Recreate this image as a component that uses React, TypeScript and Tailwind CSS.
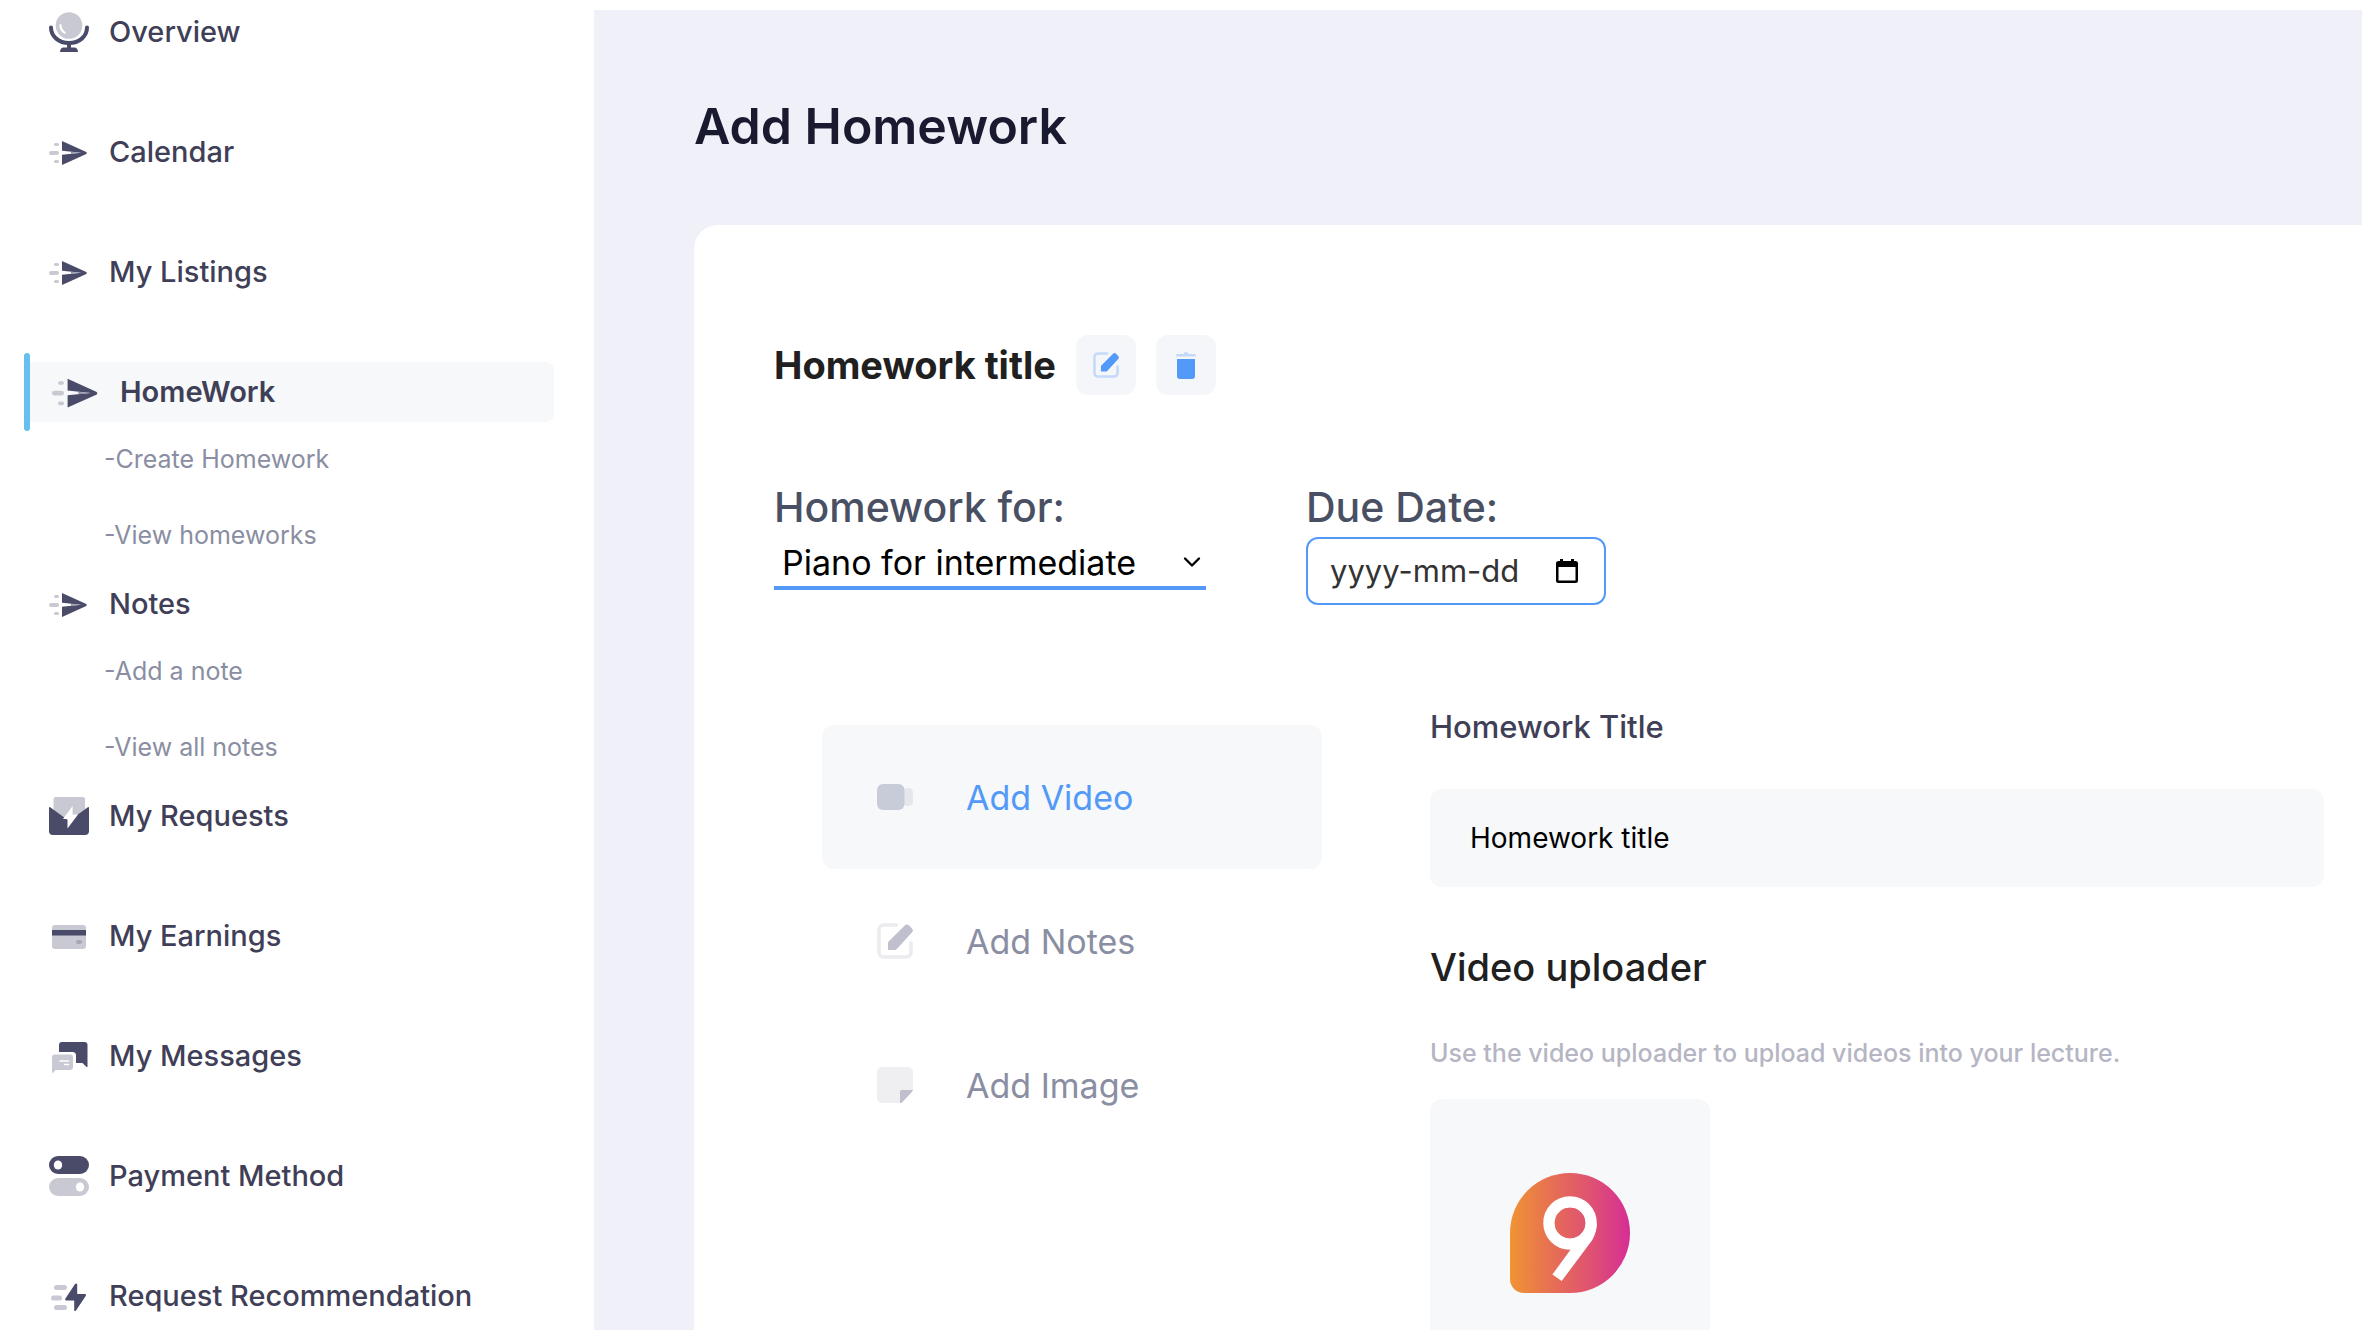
import { useState } from 'react';
import type { ReactNode } from 'react';
import { ChevronDown } from 'lucide-react';

interface NavEntry {
  label: string;
  icon: ReactNode;
  active?: boolean;
  children?: string[];
}

type Tab = 'video' | 'notes' | 'image';

const DARK = '#4a4b68';
const LIGHT = '#c9c9d3';

const MicIcon = () => (
  <svg viewBox="0 0 40 40" className="size-10 shrink-0" fill="none" aria-hidden="true">
    <ellipse cx="20" cy="13.5" rx="13.3" ry="13.3" fill={LIGHT} />
    <path d="M10.6 12.6c.6-1.2 1.8-.6 2 .8.5 2.8 1.6 4.8 3.7 6.6 1.2 1.1.2 2.2-1.1 1.6-3.4-1.7-5.2-5.5-4.6-9z" fill="#fff" />
    <path d="M2 15.5C2 24.500 9.800 31 20 31s18-6.500 18-15.500" stroke={DARK} strokeWidth="4" strokeLinecap="round" />
    <path d="M18 31h4v4.500h3.500c2 0 3.500 2 3.500 4.500H11c0-2.500 1.500-4.500 3.500-4.500H18z" fill={DARK} />
  </svg>
);

const SendIcon = ({ className = 'size-10' }: { className?: string }) => (
  <svg viewBox="0 0 40 40" className={`${className} shrink-0`} aria-hidden="true">
    <path d="M13 9l24.300 11q1 1 0 2L13 33V22.800l19-2L13 18.800z" fill={DARK} />
    <path d="M22 19.900l11 .9-11 1z" fill="#8f8fa5" />
    <rect x="5" y="11" width="5" height="3" rx="1.500" fill={LIGHT} />
    <rect x="0" y="19" width="10" height="4" rx="2" fill={LIGHT} />
    <rect x="5" y="28" width="5" height="3" rx="1.500" fill={LIGHT} />
  </svg>
);

const RequestsIcon = () => (
  <svg viewBox="0 0 40 40" className="size-10 shrink-0" aria-hidden="true">
    <rect x="4.500" y="1" width="31.500" height="28" rx="2" fill={LIGHT} />
    <path d="M0 11.600q.3-.8 1.200-.3L20 25l18.800-13.700q.9-.5 1.200.3V35a4 4 0 0 1-4 4H4a4 4 0 0 1-4-4z" fill={DARK} />
    <path d="M23.600 10L14 23h4.500v9.500L29 18.500h-5.400z" fill="#fff" />
  </svg>
);

const CardIcon = () => (
  <svg viewBox="0 0 40 40" className="size-10 shrink-0" aria-hidden="true">
    <rect x="3" y="9" width="34" height="24" rx="3" fill={LIGHT} />
    <rect x="3" y="14" width="34" height="5.500" fill={DARK} />
    <rect x="27" y="24" width="6" height="4" rx="2" fill="#a7a7b7" />
  </svg>
);

const MessagesIcon = () => (
  <svg viewBox="0 0 40 40" className="size-10 shrink-0" aria-hidden="true">
    <path d="M10 16V9a3 3 0 0 1 3-3h22.500a3 3 0 0 1 3 3v21.500q-.2.900-1 .4L33.500 27H27v-7.500a3.500 3.500 0 0 0-3.500-3.500z" fill={DARK} />
    <path d="M6 18.500h15a3 3 0 0 1 3 3V31a3 3 0 0 1-3 3H6.500L4 36.800q-.8.300-1-.5V21.500a3 3 0 0 1 3-3z" fill={LIGHT} />
    <path d="M11 25h8.500M15.500 28.500h4" stroke="#fff" strokeWidth="1.500" strokeLinecap="round" />
  </svg>
);

const TogglesIcon = () => (
  <svg viewBox="0 0 40 40" className="size-10 shrink-0" aria-hidden="true">
    <rect width="40" height="18" rx="9" fill={DARK} />
    <ellipse cx="9" cy="9" rx="4.200" ry="4.500" fill="#fff" />
    <rect y="22" width="40" height="18" rx="9" fill={LIGHT} />
    <ellipse cx="31" cy="31" rx="4.200" ry="4.500" fill="#fff" />
  </svg>
);

const BoltIcon = () => (
  <svg viewBox="0 0 40 40" className="size-10 shrink-0" aria-hidden="true">
    <path d="M26 8q1.500-1 2.200 0v10H36q1.500.3 1 1.500L27 34.500q-1 1-1.800 0V24.500H17q-1.300-.4-.7-1.700z" fill={DARK} />
    <rect x="5" y="9" width="13" height="5" rx="2.500" fill={LIGHT} />
    <rect x="2" y="19.500" width="11" height="5" rx="2.500" fill={LIGHT} />
    <rect x="5" y="29" width="13" height="5" rx="2.500" fill={LIGHT} />
  </svg>
);

const EditIcon = ({ className, frame, pen }: { className: string; frame: string; pen: string }) => (
  <svg viewBox="0 0 36 36" className={`${className} shrink-0`} fill="none" aria-hidden="true">
    <path d="M19.500 2H7a5 5 0 0 0-5 5v22a5 5 0 0 0 5 5h22a5 5 0 0 0 5-5v-9" stroke={frame} strokeWidth="3.600" strokeLinecap="round" />
    <path d="M11 27v-6.500q0-1.300.9-2.300L27.800 2.500q2.200-1.900 4.300 0l2.800 2.900q1.900 2.100 0 4.200L20 25.800Q18.800 27 17.300 27z" fill={pen} />
  </svg>
);

const TrashIcon = () => (
  <svg viewBox="0 0 20 27" className="h-[27px] w-5" aria-hidden="true">
    <path d="M1 2h6.500q.3-2 2.500-2t2.500 2H19q1 0 1 1.200T19 4.500H1Q0 4.500 0 3.200T1 2z" fill="#c5dafa" />
    <path d="M1 7h18v17a3 3 0 0 1-3 3H4a3 3 0 0 1-3-3z" fill="#5299f8" />
  </svg>
);

const VideoIcon = () => (
  <svg viewBox="0 0 36 36" className="size-9 shrink-0" aria-hidden="true">
    <rect x="26" y="9" width="10" height="18" rx="4.500" fill="#e6e7ed" />
    <rect x="0" y="5" width="27.500" height="26" rx="6" fill="#c8ccd9" />
  </svg>
);

const ImageIcon = () => (
  <svg viewBox="0 0 36 36" className="size-9 shrink-0" aria-hidden="true">
    <path d="M5 0h26a5 5 0 0 1 5 5v18L24 36H5a5 5 0 0 1-5-5V5a5 5 0 0 1 5-5z" fill="#efeff2" />
    <path d="M23 36V24.500q0-1.500 1.500-1.500H36q-.2.900-.9 1.700L25 35.500q-.8.500-2 .5z" fill="#bfbfcd" />
  </svg>
);

const CalendarGlyph = () => (
  <svg viewBox="0 0 22 24" className="h-6 w-[22px]" aria-hidden="true">
    <path d="M4 0h3v2h8V0h3v2h1.500A2.500 2.500 0 0 1 22 4.500v17a2.500 2.500 0 0 1-2.500 2.500h-17A2.500 2.500 0 0 1 0 21.500v-17A2.500 2.500 0 0 1 2.500 2H4zM2.500 8v13.500h17V8z" fill="#000" fillRule="evenodd" />
  </svg>
);

const UploadLogo = () => (
  <svg viewBox="0 0 120 120" className="size-[120px]" fill="none" aria-hidden="true">
    <defs>
      <linearGradient id="logoFill" x1="0" x2="1" y1="0" y2="0">
        <stop offset="0" stopColor="#f09433" />
        <stop offset=".3" stopColor="#e8744f" />
        <stop offset=".7" stopColor="#de4f74" />
        <stop offset="1" stopColor="#d62e95" />
      </linearGradient>
      <linearGradient id="logoHole" x1="0" x2="1" y1="0" y2="0">
        <stop offset="0" stopColor="#e66a59" />
        <stop offset="1" stopColor="#df5470" />
      </linearGradient>
    </defs>
    <path d="M60 0a60 60 0 0 1 0 120H14a14 14 0 0 1-14-14V60A60 60 0 0 1 60 0z" fill="url(#logoFill)" />
    <circle cx="60" cy="50" r="21" stroke="#fff" strokeWidth="11.500" />
    <path d="M86.800 50c0 6-1.300 11-4.500 17L51.700 108l-9.300-6.500L61 76l14-20z" fill="#fff" />
    <circle cx="60" cy="50" r="15.300" fill="url(#logoHole)" />
  </svg>
);

const navEntries: NavEntry[] = [
  { label: 'Overview', icon: <MicIcon /> },
  { label: 'Calendar', icon: <SendIcon /> },
  { label: 'My Listings', icon: <SendIcon /> },
  { label: 'HomeWork', icon: <SendIcon className="size-12" />, active: true, children: ['Create Homework', 'View homeworks'] },
  { label: 'Notes', icon: <SendIcon />, children: ['Add a note', 'View all notes'] },
  { label: 'My Requests', icon: <RequestsIcon /> },
  { label: 'My Earnings', icon: <CardIcon /> },
  { label: 'My Messages', icon: <MessagesIcon /> },
  { label: 'Payment Method', icon: <TogglesIcon /> },
  { label: 'Request Recommendation', icon: <BoltIcon /> },
];

const tabs: { key: Tab; label: string; icon: ReactNode }[] = [
  { key: 'video', label: 'Add Video', icon: <VideoIcon /> },
  { key: 'notes', label: 'Add Notes', icon: <EditIcon className="size-9" frame="#ebebf0" pen="#bfbfcd" /> },
  { key: 'image', label: 'Add Image', icon: <ImageIcon /> },
];

function NavItem({ entry }: { entry: NavEntry }) {
  return (
    <li className={entry.children ? '' : 'mb-[60px]'}>
      {entry.active ? (
        <div className="flex h-[60px] items-center">
          <span className="h-[78px] w-1.5 shrink-0 rounded-full bg-[#67bff0]" />
          <a href="#" className="flex h-full flex-1 items-center gap-5 rounded-r-lg bg-[#f7f8fa] pl-[22px] text-[29px] font-semibold">
            {entry.icon}
            {entry.label}
          </a>
        </div>
      ) : (
        <a href="#" className="flex h-[60px] items-center gap-5 pl-[25px] text-[29px] font-medium">
          {entry.icon}
          {entry.label}
        </a>
      )}

      {entry.children && (
        <ul className="pl-20 text-[25px] text-[#8a8ea2]">
          {entry.children.map((child) => (
            <li key={child}>
              <a href="#" className="flex h-[76px] items-center">-{child}</a>
            </li>
          ))}
        </ul>
      )}
    </li>
  );
}

export default function App() {
  const [tab, setTab] = useState<Tab>('video');
  const [title, setTitle] = useState('Homework title');
  const [dueDate, setDueDate] = useState('');

  return (
    <div className="flex h-screen overflow-hidden bg-white font-['Inter',sans-serif] text-[#3f4057]">
      {/* Sidebar */}
      <nav className="w-[594px] shrink-0 pt-0.5 pr-10 pl-6">
        <ul>
          {navEntries.map((entry) => (
            <NavItem key={entry.label} entry={entry} />
          ))}
        </ul>
      </nav>

      {/* Page */}
      <main className="mt-2.5 flex min-w-0 flex-1 flex-col bg-[#f0f0f9] pt-20 pl-[100px]">
        <h1 className="mb-[63px] text-[50px] leading-[72px] font-semibold text-[#191a30]">Add Homework</h1>

        <section className="flex-1 rounded-tl-3xl bg-white pt-[110px] pr-[38px] pl-20">
          <div className="flex items-center gap-5">
            <h2 className="text-[38px] leading-[56px] font-bold text-[#202020]">{title}</h2>
            <button aria-label="Edit title" className="flex size-[60px] items-center justify-center rounded-xl bg-[#f5f6fa]">
              <EditIcon className="size-[26px]" frame="#c5dafa" pen="#5299f8" />
            </button>
            <button aria-label="Delete homework" className="flex size-[60px] items-center justify-center rounded-xl bg-[#f5f6fa]">
              <TrashIcon />
            </button>
          </div>

          {/* Class and due date */}
          <div className="mt-[82px] flex items-start gap-[100px]">
            <div className="w-[432px]">
              <label htmlFor="class" className="block text-[41px] leading-[60px] font-medium text-[#4a5063]">Homework for:</label>
              <div className="grid items-center border-b-4 border-[#5299f8]">
                <select id="class" className="col-start-1 row-start-1 h-[49px] appearance-none bg-transparent px-2 text-[34px] text-black">
                  <option>Piano for intermediate</option>
                </select>
                <ChevronDown className="pointer-events-none col-start-1 row-start-1 size-7 justify-self-end text-black" strokeWidth={2} />
              </div>
            </div>

            <div className="w-[300px]">
              <label htmlFor="due" className="block text-[41px] leading-[60px] font-medium text-[#4a5063]">Due Date:</label>
              <div className="flex h-[68px] items-center rounded-xl border-2 border-[#5299f8] pr-[26px] pl-[22px]">
                <input
                  id="due"
                  type="text"
                  placeholder="yyyy-mm-dd"
                  value={dueDate}
                  onChange={(e) => setDueDate(e.target.value)}
                  className="w-full min-w-0 text-[31px] outline-none placeholder:text-[#333333]"
                />
                <button aria-label="Open calendar">
                  <CalendarGlyph />
                </button>
              </div>
            </div>
          </div>

          <div className="mt-[100px] flex gap-[108px]">
            {/* Content type */}
            <div className="ml-12 w-[500px] shrink-0 pt-5">
              {tabs.map((item) => (
                <button
                  key={item.key}
                  onClick={() => setTab(item.key)}
                  className={`flex h-36 w-full items-center gap-[53px] rounded-xl pl-[55px] text-[34px] ${
                    tab === item.key ? 'bg-[#f7f8fa] text-[#5299f8]' : 'text-[#8a8ea2]'
                  }`}
                >
                  {item.icon}
                  {item.label}
                </button>
              ))}
            </div>

            {/* Editor */}
            <div className="min-w-0 flex-1">
              <label htmlFor="title" className="block text-[31px] leading-[44px] font-medium">Homework Title</label>
              <input
                id="title"
                type="text"
                value={title}
                onChange={(e) => setTitle(e.target.value)}
                className="mt-10 h-[98px] w-full rounded-xl bg-[#f7f8fa] px-10 text-[28px] text-black outline-none"
              />
              <h3 className="mt-[52px] text-[38px] leading-[56px] font-medium text-[#202020]">Video uploader</h3>
              <p className="mt-10 text-[25px] leading-9 font-medium text-[#b5b5c3]">
                Use the video uploader to upload videos into your lecture.
              </p>
              <button aria-label="Upload video" className="mt-7 flex h-[280px] w-[280px] justify-center rounded-xl bg-[#f7f8fa] pt-[74px]">
                <UploadLogo />
              </button>
            </div>
          </div>
        </section>
      </main>
    </div>
  );
}
